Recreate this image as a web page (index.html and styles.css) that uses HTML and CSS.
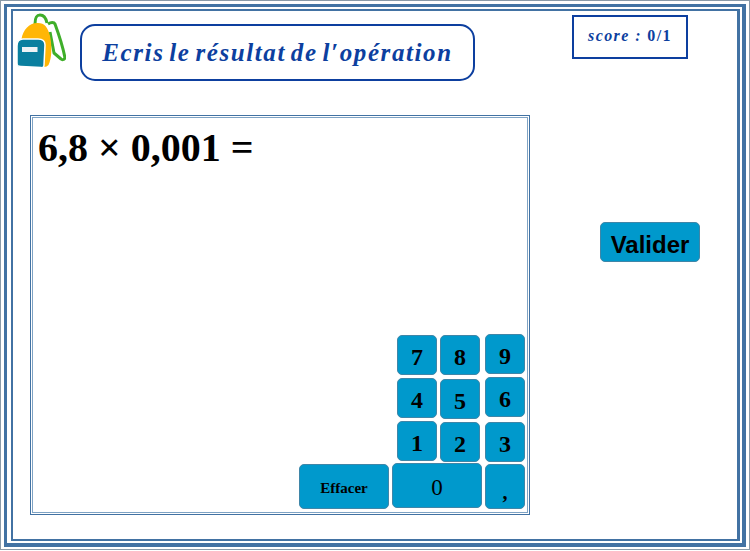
FILE: index.html
```html
<!DOCTYPE html>
<html lang="fr">
<head>
  <meta charset="UTF-8">
  <meta name="viewport" content="width=device-width, initial-scale=1.0">
  <title>Ecris le résultat de l'opération</title>
  <link rel="stylesheet" href="styles.css">
</head>
<body>
  <div class="page">
    <div class="frame-outer">
      <div class="frame-inner">
        <header class="top">
          <svg class="bag" viewBox="0 0 50 56" width="50" height="56" aria-hidden="true">
            <path d="M19 11 C19 5 20 2 24 2 C28 2 30 5 31 10" fill="none" stroke="#3fae2a" stroke-width="3"/>
            <path d="M32 11 C35 9 38 9 39 11 C43 22 47 34 49 45 C48 47 46 47 45 46 L38 40 L34 19" fill="none" stroke="#3fae2a" stroke-width="3" stroke-linejoin="round"/>
            <path d="M5.500 26 C7 17 13 10 21 10 C28 9.500 32 14 34 23 C36 33 36 45 32.500 52 C31 54 28 54 26 53.500 L28 27 L5.500 26 Z" fill="#ffb606"/>
            <path d="M1 33 C1 28 3 26 7 26 L22 26 C26 26 29 28 29 32 L28 52 C28 54 27 55 25 54.500 L5 53.500 C2 53.500 1 53 1 50 Z" fill="#0a7f9f" stroke="#fff" stroke-width="1.500"/>
            <rect x="6" y="34" width="15.500" height="5" fill="#eef2f5"/>
          </svg>
          <h1 class="title">Ecris le résultat de l′opération</h1>
          <div class="score">score : <span class="score-num">0/1</span></div>
        </header>
        <main class="content">
          <section class="board">
            <p class="question">6,8 × 0,001 =</p>
            <div class="keypad">
              <div class="digits">
                <div class="col col-a">
                  <button class="key">7</button>
                  <button class="key">4</button>
                  <button class="key">1</button>
                </div>
                <div class="col col-b">
                  <button class="key">8</button>
                  <button class="key">5</button>
                  <button class="key">2</button>
                </div>
                <div class="col col-c">
                  <button class="key">9</button>
                  <button class="key">6</button>
                  <button class="key">3</button>
                </div>
              </div>
              <div class="bottom-keys">
                <button class="key key-wide key-clear">Effacer</button>
                <button class="key key-wide key-zero">0</button>
                <button class="key key-comma">,</button>
              </div>
            </div>
          </section>
          <button class="validate">Valider</button>
        </main>
      </div>
    </div>
  </div>
</body>
</html>
```

FILE: styles.css
```css
html, body {
  margin: 0;
  padding: 0;
  background: #fff;
}
.page {
  box-sizing: border-box;
  width: 750px;
  height: 550px;
  border: 1px solid #8a9aa8;
  padding: 3px 3px 2px;
  overflow: hidden;
}
.frame-outer {
  box-sizing: border-box;
  height: 100%;
  border: solid #4272a3;
  border-width: 3px 4px 4px 3px;
  padding: 2px 2px 2px 4px;
}
.frame-inner {
  box-sizing: border-box;
  height: 100%;
  border: 2px solid #4272a3;
  border-right-width: 3px;
}
.top {
  display: flex;
  align-items: flex-start;
  height: 104px;
}
.bag {
  flex: none;
  margin: 2px 0 0 3px;
}
.title {
  box-sizing: border-box;
  width: 395px;
  height: 57px;
  margin: 13px 0 0 14px;
  border: 2px solid #0d3f9f;
  border-radius: 15px;
  color: #0d3f9f;
  font: italic 700 25px/53px "Liberation Serif", serif;
  letter-spacing: 1.6px;
  word-spacing: -3px;
  text-align: center;
  white-space: nowrap;
}
.score {
  box-sizing: border-box;
  width: 116px;
  height: 44px;
  margin: 4px 0 0 97px;
  border: 2px solid #0d3f9f;
  color: #0d3f9f;
  font: italic 700 16px/38px "Liberation Serif", serif;
  letter-spacing: 1.4px;
  text-align: center;
}
.score-num {
  font-style: normal;
}
.content {
  display: flex;
  align-items: flex-start;
}
.board {
  box-sizing: border-box;
  display: flex;
  flex-direction: column;
  justify-content: space-between;
  width: 500px;
  height: 400px;
  margin-left: 17px;
  border: 1px solid #4272a3;
  outline: 1px solid #7fa3c4;
  outline-offset: -3px;
  padding: 4px 4px 5px;
}
.question {
  margin: 6px 0 0 3px;
  color: #000;
  font: 700 40px/44px "Liberation Serif", serif;
}
.keypad {
  display: flex;
  flex-direction: column;
  align-items: flex-end;
}
.digits {
  display: flex;
  gap: 3px;
}
.col {
  display: flex;
  flex-direction: column;
  gap: 3px;
}
.col-b {
  margin-right: 2px;
}
.col-b .key:nth-child(2) {
  margin-top: 1px;
}
.col-c {
  margin-top: -1px;
}
.col-c .key:nth-child(3) {
  margin-top: 2px;
}
.key {
  box-sizing: border-box;
  width: 40px;
  height: 40px;
  padding: 5px 0 0;
  border: 1px solid #3f86a8;
  border-radius: 5px;
  background: #0099cc;
  color: #000;
  font: 700 24px "Liberation Serif", serif;
}
.bottom-keys {
  display: flex;
  align-items: flex-start;
  margin-top: 1px;
}
.key-wide {
  width: 90px;
  height: 45px;
}
.key-clear {
  margin: 1px 3px 0 0;
  padding-top: 4px;
  font-size: 15px;
}
.key-zero {
  margin-right: 3px;
  padding-top: 4px;
  font-size: 23px;
  font-weight: 400;
}
.key-comma {
  height: 45px;
  margin-top: 1px;
  padding-top: 12px;
  font-size: 20px;
}
.validate {
  box-sizing: border-box;
  width: 100px;
  height: 40px;
  margin: 107px 0 0 70px;
  padding: 5px 0 0;
  border: 1px solid #3f86a8;
  border-radius: 5px;
  background: #0099cc;
  color: #000;
  font: 700 24px "Liberation Sans", sans-serif;
}
```
